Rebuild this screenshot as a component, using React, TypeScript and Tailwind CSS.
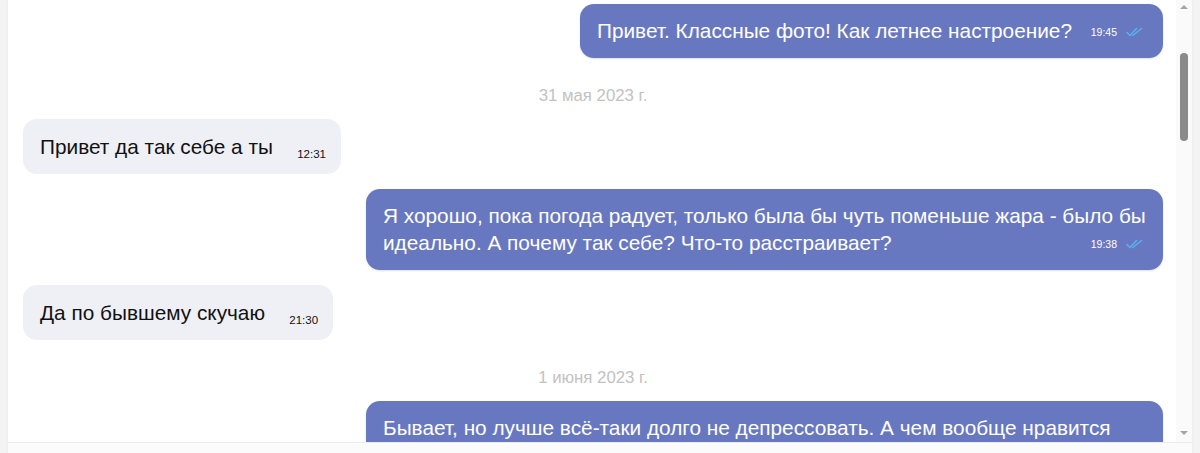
import React from 'react'

type Msg =
  | { kind: 'date'; text: string }
  | { kind: 'in' | 'out'; text: string; time: string }

const MESSAGES: Msg[] = [
  { kind: 'out', text: 'Привет. Классные фото! Как летнее настроение?', time: '19:45' },
  { kind: 'date', text: '31 мая 2023 г.' },
  { kind: 'in', text: 'Привет да так себе а ты', time: '12:31' },
  {
    kind: 'out',
    text: 'Я хорошо, пока погода радует, только была бы чуть поменьше жара - было бы идеально. А почему так себе? Что-то расстраивает?',
    time: '19:38',
  },
  { kind: 'in', text: 'Да по бывшему скучаю', time: '21:30' },
  { kind: 'date', text: '1 июня 2023 г.' },
  {
    kind: 'out',
    text: 'Бывает, но лучше всё-таки долго не депрессовать. А чем вообще нравится заниматься в свободное время?',
    time: '10:12',
  },
]

function DoubleCheck() {
  return (
    <svg width="17" height="10" viewBox="0 0 17 10" fill="none" className="inline-block">
      <path d="M1 5.5 L4 8.5 L10.5 1.5" stroke="#5cb0f0" strokeWidth="1.5" strokeLinecap="round" strokeLinejoin="round" />
      <path d="M6.8 8.5 L15.5 1.5" stroke="#5cb0f0" strokeWidth="1.5" strokeLinecap="round" strokeLinejoin="round" />
    </svg>
  )
}

function Bubble({ msg }: { msg: Extract<Msg, { kind: 'in' | 'out' }> }) {
  const out = msg.kind === 'out'
  return (
    <div className={out ? 'flex justify-end' : 'flex justify-start'}>
      <div
        className={
          out
            ? 'relative max-w-[797px] rounded-[14px] bg-[#6878c0] pl-[17px] pr-[17px] pt-[13px] pb-[14px] text-[20.8px] leading-[27px] text-white shadow-[0_1px_2px_rgba(0,0,0,0.12)]'
            : 'relative max-w-[797px] rounded-[14px] bg-[#eef0f6] pl-[17px] pr-[15px] pt-[14px] pb-[14px] text-[20.8px] leading-[27px] text-[#111]'
        }
      >
        {msg.text}
        <span className={out ? 'inline-block w-[74px]' : 'inline-block w-[53px]'} />
        {out ? (
          <span className="absolute right-[20px] bottom-[20px] flex items-center gap-[9px] text-[10.5px] leading-[12px] text-white">
            {msg.time}
            <DoubleCheck />
          </span>
        ) : (
          <span className="absolute right-[15px] bottom-[13px] text-[11.5px] leading-[13px] text-[#111]">
            {msg.time}
          </span>
        )}
      </div>
    </div>
  )
}

function Scrollbar() {
  return (
    <div className="relative flex w-[16px] shrink-0 flex-col items-center bg-[#fafafa]">
      <div className="mt-[5px] h-0 w-0 border-x-[4px] border-b-[4px] border-x-transparent border-b-[#a3a3a3]" />
      <div className="mt-[44px] h-[88px] w-[8px] rounded-[4px] bg-[#8a8a8a]" />
      <div className="flex-1" />
      <div className="mb-[7px] h-0 w-0 border-x-[4px] border-t-[4px] border-x-transparent border-t-[#a3a3a3]" />
    </div>
  )
}

export default function App() {
  return (
    <div
      className="flex h-[453px] w-[1200px] bg-[#f3f3f3] pl-[8px] pr-[8px]"
      style={{ fontFamily: '"Liberation Sans", Arial, sans-serif' }}
    >
      <div className="flex flex-1 flex-col bg-white shadow-[0_0_3px_rgba(0,0,0,0.06)]">
        <div className="flex h-[442px] overflow-hidden">
          <div className="flex-1 overflow-hidden pl-[15px] pr-[13px] pt-[4px]">
            {MESSAGES.map((m, i) =>
              m.kind === 'date' ? (
                <div
                  key={i}
                  className="mt-[28px] mb-[13px] text-center text-[16.8px] leading-[20px] text-[#c2c2c2]"
                >
                  {m.text}
                </div>
              ) : (
                <div key={i} className={i === 0 || MESSAGES[i - 1].kind === 'date' ? '' : 'mt-[15px]'}>
                  <Bubble msg={m} />
                </div>
              )
            )}
          </div>
          <Scrollbar />
        </div>
        <div className="flex-1 border-t border-[#ececec] bg-[#fbfbfb]" />
      </div>
    </div>
  )
}
